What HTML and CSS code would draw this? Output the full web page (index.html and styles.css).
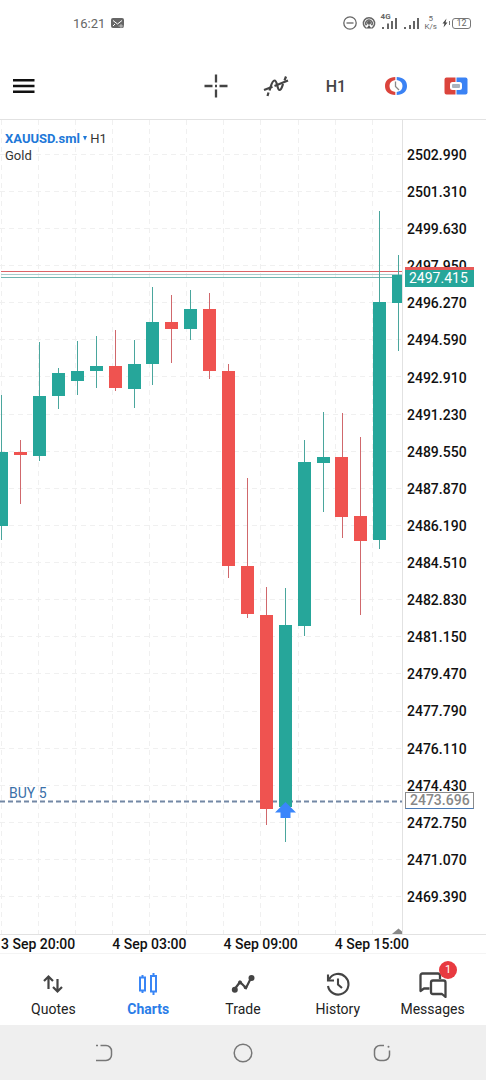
FILE: index.html
```html
<!DOCTYPE html>
<html lang="en">
<head>
  <meta charset="UTF-8">
  <meta name="viewport" content="width=device-width, initial-scale=1">
  <title>XAUUSD.sml H1</title>
  <link rel="stylesheet" href="styles.css">
</head>
<body>
  <div class="app">
    <div class="status-bar">
      <div class="status-left">
        <span>16:21</span>
        <svg width="13" height="11" viewBox="0 0 13 11">
          <rect width="13" height="10" rx="2" fill="#666"/>
          <path d="M2 2.500l4.500 3.500L11 2.500M2 8l2-2" fill="none" stroke="#fff"/>
          <path d="M7.500 8h5M10 6v4.500" stroke="#ddd" stroke-width="0.700"/>
        </svg>
      </div>
      <div class="status-right">
        <svg width="14" height="14" viewBox="0 0 14 14" fill="none" stroke="#666" stroke-width="1.3">
          <circle cx="7" cy="7" r="6.200"/>
          <path d="M3.500 7h7"/>
        </svg>
        <svg width="14" height="14" viewBox="0 0 14 14" fill="none" stroke="#666" stroke-width="1.5">
          <path d="M4.500 12.300a5.600 5.600 0 1 1 5 0"/>
          <path d="M4.500 9.300a3.200 3.200 0 1 1 5 0"/>
          <circle cx="7" cy="6.800" r="1.300" fill="#555"/>
          <path d="M4.500 12.500L7 9l2.500 3.500z" fill="#555" stroke="none"/>
        </svg>
        <div class="signal">
          <span class="signal-type">4G</span>
          <svg width="17" height="16" viewBox="0 0 17 16" stroke="#666" stroke-width="2">
            <path d="M2 14v-2M7 14V8.500M11 14V6M15 14V3"/>
          </svg>
        </div>
        <svg width="17" height="16" viewBox="0 0 17 16" stroke="#666" stroke-width="2">
          <path d="M2 14v-2M7 14v-4M11 14V6M15 14V3"/>
        </svg>
        <div class="speed"><span>5</span><span>K/s</span></div>
        <div class="power">
          <svg width="8" height="10" viewBox="0 0 8 10">
            <path d="M4.500 0.500L0.500 5.500h2L1.500 9.500l4-5h-2z" fill="#444"/>
            <path d="M7.500 3v4" stroke="#777"/>
          </svg>
          <span class="battery">12</span>
        </div>
      </div>
    </div>

    <header class="toolbar">
      <button class="tool menu" aria-label="Menu">
        <svg width="22" height="16" viewBox="0 0 22 16" stroke="#111" stroke-width="2.4">
          <path d="M0 2.200h21.500M0 8h21.500M0 13.800h21.500"/>
        </svg>
      </button>
      <div class="tools">
        <button class="tool" aria-label="Crosshair">
          <svg width="24" height="24" viewBox="0 0 24 24" stroke="#444" stroke-width="2.300">
            <path d="M0.500 12h8M15.500 12h8M12 0.500v8M12 15.500v8M11 12h2"/>
          </svg>
        </button>
        <button class="tool" aria-label="Indicators">
          <svg width="26" height="24" viewBox="0 0 26 24" fill="none" stroke="#444" stroke-width="2.200">
            <path d="M1 16l8.500-3.200M11.500 12L25 6.500"/>
            <path d="M4.500 22l1-3.500M6.500 16.500C8 12 9 6.500 11.500 6.500c3 0 2.500 9.500 5 9.500 2 0 2.500-3 3.500-6M21.500 6.500L23 2.500"/>
          </svg>
        </button>
        <button class="tool">H1</button>
        <button class="tool" aria-label="Trading hours">
          <svg width="24" height="20" viewBox="0 0 24 20" fill="none">
            <path d="M11.300 1C5 1 1 4.500 1 10s4 9 10.300 9v-3C7.500 15.500 5.500 13.500 5.500 10s2-5.500 5.800-6z" fill="#db443c"/>
            <path d="M12.700 1C19 1 23 4.500 23 10s-4 9-10.300 9v-3c3.800-.5 5.800-2.500 5.800-6s-2-5.500-5.800-6z" fill="#3a82f4"/>
            <path d="M11.500 5.500v5l3.500 3.500" stroke="#888" stroke-width="1.300"/>
          </svg>
        </button>
        <button class="tool" aria-label="One click trading">
          <svg width="24" height="18" viewBox="0 0 24 18">
            <path d="M2.500 0.500h9v17h-9a2 2 0 0 1-2-2v-13a2 2 0 0 1 2-2z" fill="#db443c"/>
            <path d="M12.500 0.500h9a2 2 0 0 1 2 2v13a2 2 0 0 1-2 2h-9z" fill="#3a82f4"/>
            <rect x="6" y="5" width="12" height="8" rx="2.500" fill="#fff"/>
            <rect x="8" y="7" width="8" height="4" rx="1" fill="#aab4be"/>
          </svg>
        </button>
      </div>
    </header>

    <main class="chart">
      <div class="plot">
        <svg class="plot-canvas" viewBox="0 0 402 814" preserveAspectRatio="none">
          <path class="grid" d="M1.500 0V814M38.500 0V814M75.500 0V814M112.500 0V814M149.500 0V814M186.500 0V814M223.500 0V814M260.500 0V814M298.500 0V814M335.500 0V814M372.500 0V814"/>
          <path class="grid" d="M0 34.500H402M0 71.500H402M0 108.500H402M0 145.500H402M0 182.500H402M0 219.500H402M0 256.500H402M0 294.500H402M0 331.500H402M0 368.500H402M0 405.500H402M0 442.500H402M0 479.500H402M0 516.500H402M0 553.500H402M0 591.500H402M0 628.500H402M0 665.500H402M0 702.500H402M0 739.500H402M0 776.500H402"/>

          <!-- ask / bid -->
          <path d="M1 151.500H402" stroke="#dc6468"/>
          <path d="M1 154.500H402" stroke="#a9cccc"/>
          <path d="M1 157.500H402" stroke="#6fb5b0"/>

          <!-- open position -->
          <path d="M0 681.500H402" stroke="#7388a5" stroke-width="2" stroke-dasharray="5 3"/>

          <g class="up">
            <path d="M1.500 275V420M39.500 222V341M58.500 248V289M77.500 221V275M96.500 216V268M134.500 220V288M152.500 167V265M190.500 170V220M285.500 468V722M304.500 320V516M323.500 292V392M379.500 91V429M398.500 135V231"/>
            <rect x="0" y="332" width="8" height="74"/>
            <rect x="33" y="276" width="13" height="60"/>
            <rect x="52" y="253" width="13" height="23"/>
            <rect x="71" y="251" width="13" height="10"/>
            <rect x="90" y="246" width="13" height="5"/>
            <rect x="128" y="244" width="13" height="25"/>
            <rect x="146" y="202" width="13" height="42"/>
            <rect x="184" y="189" width="13" height="20"/>
            <rect x="279" y="505" width="13" height="182"/>
            <rect x="298" y="342" width="13" height="164"/>
            <rect x="317" y="337" width="13" height="6"/>
            <rect x="373" y="182" width="13" height="238"/>
            <rect x="392" y="155" width="10" height="28"/>
          </g>
          <g class="down">
            <path d="M20.500 320V384M115.500 210V271M171.500 175V243M209.500 173V259M228.500 244V458M247.500 358V498M266.500 467V705M342.500 293V418M360.500 317V495"/>
            <rect x="14" y="332" width="13" height="3"/>
            <rect x="109" y="246" width="13" height="22"/>
            <rect x="165" y="202" width="13" height="7"/>
            <rect x="203" y="189" width="13" height="62"/>
            <rect x="222" y="251" width="13" height="195"/>
            <rect x="241" y="446" width="13" height="48"/>
            <rect x="260" y="495" width="13" height="194"/>
            <rect x="335" y="337" width="13" height="60"/>
            <rect x="354" y="396" width="13" height="25"/>
          </g>

          <path d="M285.500 682l10.500 10.500h-5.500v5.500h-10v-5.500H275z" fill="#3a86fb"/>
          <path d="M392 814l6.500-5.500 3.500 3V814z" fill="#888"/>
        </svg>
        <div class="symbol">
          <div><button class="symbol-name">XAUUSD.sml <svg width="4" height="5" viewBox="0 0 4 5"><path d="M0 0h4L2 4.500z" fill="#1e78d8"/></svg></button> H1</div>
          <div>Gold</div>
        </div>
        <span class="position-label">BUY 5</span>
      </div>
      <div class="prices">
        <span>2502.990</span>
        <span>2501.310</span>
        <span>2499.630</span>
        <span>2497.950</span>
        <span>2496.270</span>
        <span>2494.590</span>
        <span>2492.910</span>
        <span>2491.230</span>
        <span>2489.550</span>
        <span>2487.870</span>
        <span>2486.190</span>
        <span>2484.510</span>
        <span>2482.830</span>
        <span>2481.150</span>
        <span>2479.470</span>
        <span>2477.790</span>
        <span>2476.110</span>
        <span>2474.430</span>
        <span>2472.750</span>
        <span>2471.070</span>
        <span>2469.390</span>
        <div class="tag bid">2497.415</div>
        <div class="tag entry">2473.696</div>
      </div>
    </main>
    <div class="times">
      <span>3 Sep 20:00</span>
      <span>4 Sep 03:00</span>
      <span>4 Sep 09:00</span>
      <span>4 Sep 15:00</span>
    </div>

    <nav class="tabs">
      <a class="tab" href="#quotes">
        <svg width="24" height="24" viewBox="0 0 24 24" fill="none" stroke="#444" stroke-width="2.2">
          <path d="M7.500 17V5M3 9l4.500-4.500L12 9M16.500 7v12M12 15l4.500 4.500L21 15"/>
        </svg>
        Quotes
      </a>
      <a class="tab active" href="#charts">
        <svg width="24" height="24" viewBox="0 0 24 24" fill="none" stroke="#3a86f5" stroke-width="2">
          <path d="M6.500 3v3M6.500 18v3M17.500 1v3M17.500 20v3"/>
          <rect x="4" y="5.500" width="5" height="13"/>
          <rect x="15" y="4" width="5" height="15.500"/>
        </svg>
        Charts
      </a>
      <a class="tab" href="#trade">
        <svg width="24" height="24" viewBox="0 0 24 24" fill="none" stroke="#444" stroke-width="2.2">
          <path d="M3 18l6-8 6 6 5-10"/>
          <g fill="#444" stroke="none">
            <circle cx="3.800" cy="17.800" r="3"/><circle cx="9" cy="10.500" r="2"/>
            <circle cx="14.500" cy="15.500" r="1.800"/><circle cx="20.500" cy="6" r="3"/>
          </g>
        </svg>
        Trade
      </a>
      <a class="tab" href="#history">
        <svg width="24" height="24" viewBox="0 0 24 24" fill="none" stroke="#444" stroke-width="2.100">
          <path d="M3 7.500a10.300 10.300 0 1 1-1 6.500"/>
          <path d="M2 2.500v6h6M12 6.500v6l4 3.500"/>
        </svg>
        History
      </a>
      <a class="tab" href="#messages">
        <svg width="28" height="26" viewBox="0 0 28 26" fill="none" stroke="#444" stroke-width="2.300" stroke-linejoin="round">
          <path d="M21 7V3.500a2 2 0 0 0-2-2H3.500a2 2 0 0 0-2 2V19l3.500-2.500h5.500"/>
          <path d="M14 8.500h10.500a2 2 0 0 1 2 2V25L23 22H14a2 2 0 0 1-2-2v-9.500a2 2 0 0 1 2-2z"/>
        </svg>
        Messages
        <span class="badge">1</span>
      </a>
    </nav>

    <div class="system-nav">
      <button aria-label="Recent apps">
        <svg width="18" height="18" viewBox="0 0 18 18" fill="none" stroke="#777" stroke-width="1.500">
          <path d="M1 1.500h2M5.500 1.500H11a5.500 5.500 0 0 1 5.500 5.500v4A5.500 5.500 0 0 1 11 16.500H1"/>
        </svg>
      </button>
      <button aria-label="Home">
        <svg width="20" height="20" viewBox="0 0 20 20" fill="none" stroke="#777" stroke-width="1.500">
          <circle cx="10" cy="10" r="8.800"/>
        </svg>
      </button>
      <button aria-label="Back">
        <svg width="18" height="18" viewBox="0 0 18 18" fill="none" stroke="#777" stroke-width="1.500">
          <path d="M11 1.500H7A5.500 5.500 0 0 0 1.500 7v4A5.500 5.500 0 0 0 7 16.500h4a5.500 5.500 0 0 0 5.500-5.500V6.500"/>
          <circle cx="15.500" cy="2.800" r="1" fill="#777" stroke="none"/>
        </svg>
      </button>
    </div>
  </div>
</body>
</html>
```
FILE: styles.css
```css
body {
  margin: 0;
  background: #fff;
  color: #111;
  font-family: Roboto, "Liberation Sans", sans-serif;
  font-size: 14px;
}

button {
  margin: 0;
  padding: 0;
  border: 0;
  background: none;
  font: inherit;
  color: inherit;
  cursor: pointer;
}

.app {
  display: flex;
  flex-direction: column;
  min-height: 100vh;
}

/* status bar */

.status-bar {
  display: flex;
  align-items: center;
  justify-content: space-between;
  height: 46px;
  padding: 0 15px 0 73px;
  color: #666;
  font-size: 13px;
}

.status-left,
.status-right {
  display: flex;
  align-items: center;
  gap: 6px;
}

.status-right {
  gap: 5px;
}

.signal {
  position: relative;
  height: 16px;
}

.signal-type {
  position: absolute;
  top: -2px;
  left: 0;
  font-size: 8px;
  font-weight: 700;
  line-height: 8px;
}

.speed {
  display: flex;
  flex-direction: column;
  align-items: center;
  font-size: 8px;
  line-height: 8px;
}

.power {
  display: flex;
  align-items: center;
  gap: 2px;
}

.battery {
  box-sizing: border-box;
  width: 19px;
  border: 1px solid #777;
  border-radius: 3px;
  font-size: 9px;
  line-height: 9px;
  text-align: center;
}

/* toolbar */

.toolbar {
  display: flex;
  align-items: center;
  justify-content: space-between;
  height: 73px;
  box-sizing: border-box;
  padding-top: 7px;
}

.tools {
  display: flex;
}

.tool {
  display: flex;
  align-items: center;
  justify-content: center;
  width: 60px;
  height: 48px;
  font-size: 16px;
  font-weight: 500;
  color: #444;
}

.menu {
  width: 48px;
}

/* chart */

.chart {
  display: flex;
  flex: 1;
  border-top: 1px solid #e2e2e2;
}

.plot {
  position: relative;
  display: flex;
  flex: 1;
  min-width: 0;
}

.plot-canvas {
  flex: 1;
  min-width: 0;
}

.grid {
  fill: none;
  stroke: #f0f0f0;
  stroke-dasharray: 5 4;
}

.up {
  fill: #26a69a;
  stroke: none;
}

.up path {
  stroke: #4aa69d;
}

.down {
  fill: #ef5350;
  stroke: none;
}

.down path {
  stroke: #d0686c;
}

.symbol {
  position: absolute;
  top: 10px;
  left: 5px;
  color: #333;
  font-size: 13px;
  line-height: 17px;
}

.symbol-name {
  font-weight: 700;
  color: #1e78d8;
}

.symbol-name svg {
  vertical-align: 2px;
}

.position-label {
  position: absolute;
  bottom: 16.5%;
  left: 9px;
  line-height: 14px;
  color: #3a6fa8;
}

.prices {
  position: relative;
  display: flex;
  flex-direction: column;
  justify-content: space-between;
  box-sizing: border-box;
  width: 84px;
  padding: 25px 0 27px 4px;
  border-left: 1px solid #e2e2e2;
  font-weight: 500;
  line-height: 20px;
}

.tag {
  position: absolute;
  left: 2px;
  box-sizing: border-box;
  width: 69px;
  padding-left: 4px;
}

.bid {
  top: 18%;
  border-top: 3px solid #e85a58;
  background: #26a69a;
  color: #fff;
  font-weight: 400;
  line-height: 17px;
}

.entry {
  bottom: 15%;
  margin-bottom: 3px;
  border: 1px solid #8a8a8a;
  border-bottom-color: #4a7ab5;
  background: #fff;
  color: #888;
  line-height: 15px;
}

.times {
  display: grid;
  grid-template-columns: repeat(4, 1fr);
  height: 19px;
  box-sizing: border-box;
  padding: 0 40px 0 1px;
  border-top: 1px solid #e2e2e2;
  font-weight: 500;
  line-height: 19px;
  white-space: nowrap;
}

/* bottom tabs */

.tabs {
  display: flex;
  box-sizing: border-box;
  height: 72px;
  padding: 0 6px;
  border-top: 1px solid #f4f4f4;
}

.tab {
  position: relative;
  display: flex;
  flex: 1;
  flex-direction: column;
  align-items: center;
  justify-content: space-between;
  padding: 18px 0 8px;
  color: #222;
  line-height: 16px;
  text-decoration: none;
}

.active {
  font-weight: 700;
  color: #2a7de8;
}

.badge {
  position: absolute;
  top: 7px;
  left: 54px;
  width: 18px;
  border-radius: 50%;
  background: #e83a40;
  color: #fff;
  font-size: 11px;
  line-height: 18px;
  text-align: center;
}

.system-nav {
  display: flex;
  align-items: center;
  justify-content: space-around;
  height: 55px;
  padding: 0 35px;
  background: #efefef;
}

.system-nav svg {
  display: block;
}
```
